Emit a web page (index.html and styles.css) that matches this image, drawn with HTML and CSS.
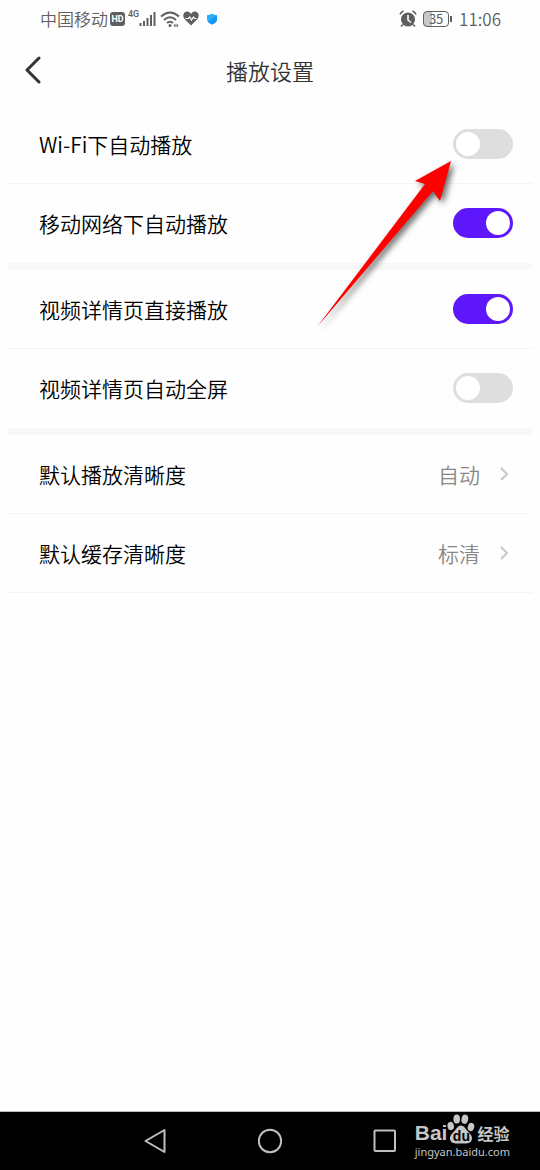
FILE: index.html
```html
<!DOCTYPE html>
<html lang="zh-CN">
<head>
  <meta charset="UTF-8" />
  <meta name="viewport" content="width=device-width, initial-scale=1.0">
  <title>播放设置</title>
  <link rel="stylesheet" href="styles.css">
</head>
<body>

  <div class="status-bar">
    <div class="status-left">
      <span>中国移动</span>
      <span class="hd">HD</span>
      <span class="signal">
        <span class="net">4G</span>
        <svg width="18" height="18" viewBox="0 0 18 18" stroke="#5f5f5f" stroke-width="2">
          <path d="M1.500 16v-3M5 16v-5M8.500 16V8M12 16V5M15.500 16V2" />
        </svg>
      </span>
      <svg width="20" height="18" viewBox="0 0 20 18" fill="none" stroke="#5f5f5f" stroke-width="2">
        <path d="M1 6.500Q10 -1.500 19 6.500M4 10Q10 4.500 16 10M7 13Q10 10.500 13 13" />
        <circle cx="10" cy="15.500" r="1.500" fill="#5f5f5f" stroke="none" />
        <path d="M13.500 15.500l2-2v4zM18.500 15.500l-2-2v4z" fill="#5f5f5f" stroke="none" />
      </svg>
      <svg width="16" height="15" viewBox="0 0 16 15">
        <path d="M8 14.500L1.500 8C-0.500 5.500 0 2 2.500 1 4.800 0 7 1 8 3 9 1 11.200 0 13.500 1 16 2 16.500 5.500 14.500 8z" fill="#5f5f5f" />
        <path d="M2.500 7.500h3l1.300-1.500 1.700 3 2-3 1 1.500H13.500" fill="none" stroke="#fff" stroke-width="1.200" />
      </svg>
      <svg class="shield" width="12" height="12" viewBox="0 0 12 12">
        <path d="M6 0.500Q8 2 11 2.200V6Q11 9.500 6 11.500 1 9.500 1 6V2.200Q4 2 6 0.500z" fill="#2aaefa" />
        <path d="M11 2.200V6Q11 9.500 6 11.500 3.500 10.500 2 8.500z" fill="#1498f2" />
      </svg>
    </div>
    <div class="status-right">
      <svg width="18" height="18" viewBox="0 0 18 18" fill="none">
        <circle cx="9" cy="9.500" r="7" fill="#5f5f5f" />
        <path d="M1 4.500Q2 2 4.500 1M17 4.500Q16 2 13.500 1M4 14.500l-2 2M14 14.500l2 2" stroke="#5f5f5f" stroke-width="1.600" />
        <path d="M9 5v5l3 2.500" stroke="#fff" stroke-width="1.600" />
      </svg>
      <span class="battery">35</span>
      <span class="time">11:06</span>
    </div>
  </div>

  <header class="header">
    <button class="back-btn" aria-label="返回">
      <svg width="16" height="28" viewBox="0 0 16 28" fill="none" stroke="#333" stroke-width="3" stroke-linecap="round" stroke-linejoin="round">
        <path d="M14 2L2 14 14 26" />
      </svg>
    </button>
    <h1>播放设置</h1>
  </header>

  <main class="settings">
    <section class="group">
      <label class="row">Wi-Fi下自动播放<input class="switch" type="checkbox"></label>
      <label class="row">移动网络下自动播放<input class="switch" type="checkbox" checked></label>
    </section>
    <section class="group">
      <label class="row">视频详情页直接播放<input class="switch" type="checkbox" checked></label>
      <label class="row">视频详情页自动全屏<input class="switch" type="checkbox"></label>
    </section>
    <section class="group">
      <button class="row">
        默认播放清晰度
        <span class="value">自动
          <svg width="8" height="14" viewBox="0 0 8 14" fill="none" stroke="#c8c8c8" stroke-width="2"><path d="M1 1l6 6-6 6" /></svg>
        </span>
      </button>
      <button class="row">
        默认缓存清晰度
        <span class="value">标清
          <svg width="8" height="14" viewBox="0 0 8 14" fill="none" stroke="#c8c8c8" stroke-width="2"><path d="M1 1l6 6-6 6" /></svg>
        </span>
      </button>
    </section>

    <!-- red pointer over the first switch -->
    <svg class="pointer" width="150" height="180" viewBox="0 0 150 180">
      <path d="M141 6L105 26 115 29 7 172 123 36 130 46z" fill="#fe0000" />
    </svg>
  </main>

  <nav class="nav">
    <button class="nav-btn" aria-label="返回">
      <svg width="24" height="26" viewBox="0 0 24 26"><path d="M2.500 13L21.500 2V24z" /></svg>
    </button>
    <button class="nav-btn" aria-label="主屏幕">
      <svg width="24" height="26" viewBox="0 0 24 26"><circle cx="12" cy="13" r="11.200" /></svg>
    </button>
    <button class="nav-btn" aria-label="最近任务">
      <svg width="24" height="26" viewBox="0 0 24 26"><rect x="1.500" y="2.500" width="20.500" height="20.500" rx="1" /></svg>
    </button>
    <div class="watermark">
      <div class="logo">
        <span class="bai">Bai</span>
        <span class="paw">
          <svg width="28" height="30" viewBox="0 0 28 30" fill="#c6c6c6">
            <ellipse cx="3.700" cy="12" rx="3.200" ry="4.200" transform="rotate(-12 3.700 12)" />
            <ellipse cx="9.700" cy="5" rx="3.300" ry="4.600" />
            <ellipse cx="17.800" cy="5.200" rx="3.300" ry="4.600" transform="rotate(12 17.800 5.200)" />
            <ellipse cx="24" cy="13" rx="3.200" ry="4.200" transform="rotate(15 24 13)" />
            <path d="M14 11.500C17 11.500 18.500 15 21 17.500 24 20.500 26 23 24.500 26.500 23 30 18.500 29.500 14 29.500S5 30 3.500 26.500C2 23 4 20.500 7 17.500 9.500 15 11 11.500 14 11.500z" />
          </svg>
          <span class="du">du</span>
        </span>
        <span class="jingyan">经验</span>
      </div>
      <div class="site">jingyan.baidu.com</div>
    </div>
  </nav>

</body>
</html>
```
FILE: styles.css
```css
* {
  box-sizing: border-box;
}

body {
  margin: 0;
  min-height: 100vh;
  display: flex;
  flex-direction: column;
  background: #fefefe;
  color: #000;
  font-family: "Noto Sans CJK SC", sans-serif;
  font-size: 21px;
  font-weight: 350;
}

button {
  padding: 0;
  border: none;
  background: none;
  color: inherit;
  font: inherit;
  cursor: pointer;
}

svg {
  display: block;
  flex: none;
}

/* status bar */
.status-bar {
  display: flex;
  justify-content: space-between;
  align-items: center;
  height: 37px;
  padding: 0 39px 0 40px;
  color: #5f5f5f;
  font-size: 17px;
  line-height: 24px;
}

.status-left,
.status-right {
  display: flex;
  align-items: center;
  gap: 3px;
}

.status-right {
  gap: 6px;
}

.hd {
  width: 15px;
  margin-left: -1px;
  border-radius: 3px;
  background: #5f5f5f;
  color: #fff;
  font-family: Roboto, sans-serif;
  font-size: 9px;
  font-weight: 700;
  line-height: 14px;
  text-align: center;
}

.signal {
  display: flex;
  align-items: flex-start;
}

.net {
  font-family: Roboto, sans-serif;
  font-size: 9px;
  font-weight: 500;
  line-height: 9px;
}

.shield {
  margin-left: 4px;
}

.battery {
  position: relative;
  width: 26px;
  margin-right: 4px;
  border: 1px solid #5f5f5f;
  border-radius: 4px;
  background: linear-gradient(90deg, #c8c8c8 35%, #fefefe 35%);
  font-size: 13px;
  font-weight: 400;
  line-height: 14px;
  text-align: center;
}

.battery::after {
  content: "";
  position: absolute;
  top: 4px;
  right: -4px;
  width: 2px;
  height: 6px;
  background: #5f5f5f;
}

/* title */
.header {
  display: grid;
  grid-template-columns: 1fr auto 1fr;
  align-items: center;
  height: 68px;
  padding: 0 25px 2px;
}

.header h1 {
  margin: 0;
  color: #333;
  font-size: 22px;
  font-weight: 350;
  line-height: 32px;
}

.back-btn {
  justify-self: start;
}

/* settings list */
.settings {
  position: relative;
  flex: 1;
  padding: 0 8px;
}

.group + .group {
  border-top: 7px solid #f7f8f7;
}

.row {
  display: flex;
  justify-content: space-between;
  align-items: center;
  width: 100%;
  height: 79px;
  padding: 0 19px 0 31px;
  border-bottom: 1px solid #f4f4f4;
  cursor: pointer;
}

.group:not(:last-of-type) .row:last-child {
  border-bottom-color: transparent;
}

.switch {
  appearance: none;
  width: 60px;
  height: 30px;
  margin: 0;
  padding: 3px;
  border-radius: 15px;
  background: #dedede;
  cursor: pointer;
}

.switch::before {
  content: "";
  display: block;
  width: 24px;
  height: 24px;
  border-radius: 50%;
  background: #fff;
}

.switch:checked {
  background: #5e17fb;
}

.switch:checked::before {
  margin-left: auto;
}

.value {
  display: flex;
  align-items: center;
  gap: 20px;
  padding-right: 5px;
  color: #888;
}

.pointer {
  position: absolute;
  top: 50px;
  right: 80px;
  filter: drop-shadow(3px 3px 3px rgba(0, 0, 0, 0.6));
  pointer-events: none;
}

/* system navigation */
.nav {
  position: relative;
  display: flex;
  justify-content: center;
  align-items: center;
  gap: 91px;
  height: 59px;
  border-top: 1px solid #bbb;
  background: #000;
}

.nav-btn svg {
  fill: none;
  stroke: #c0c0c0;
  stroke-width: 2;
  stroke-linejoin: round;
}

.watermark {
  position: absolute;
  top: 1px;
  right: 30px;
  color: #c6c6c6;
}

.logo {
  display: flex;
  align-items: flex-end;
  height: 31px;
}

.bai {
  font-family: "Liberation Sans", sans-serif;
  font-size: 21px;
  font-weight: 700;
  line-height: 22px;
}

.paw {
  position: relative;
}

.du {
  position: absolute;
  right: 0;
  bottom: 0;
  left: 0;
  color: #000;
  font-family: "Liberation Sans", sans-serif;
  font-size: 14px;
  font-weight: 700;
  line-height: 16px;
  text-align: center;
}

.jingyan {
  margin-left: 2px;
  font-size: 16px;
  font-weight: 700;
  line-height: 22px;
}

.site {
  font-family: "Noto Sans", sans-serif;
  font-size: 11px;
  font-weight: 400;
  line-height: 16px;
}
```
